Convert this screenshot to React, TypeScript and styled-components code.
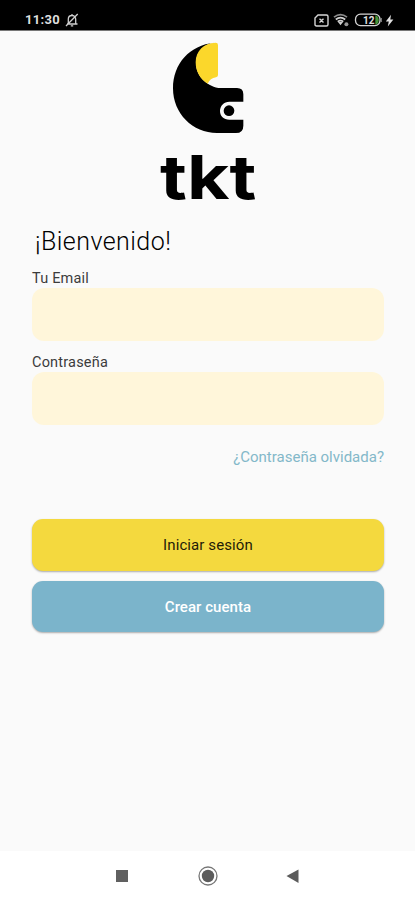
import React from "react";
import styled, { createGlobalStyle } from "styled-components";

const GlobalStyle = createGlobalStyle`
  * { box-sizing: border-box; }
  body { margin: 0; background: #fafafa; font-family: Roboto, "Liberation Sans", sans-serif; }
  svg { display: block; }
`;

const Screen = styled.div`
  display: flex;
  flex-direction: column;
  width: 415px;
  height: 900px;
  background: #fafafa;
  overflow: hidden;
`;

const StatusBar = styled.header`
  display: flex;
  align-items: flex-start;
  justify-content: space-between;
  height: 31px;
  padding: 11px 21px 0 25px;
  background: #000;
  border-bottom: 1px solid #777;
  color: #dedede;
`;

const StatusGroup = styled.div<{ $gap: number }>`
  display: flex;
  align-items: center;
  gap: ${(p) => p.$gap}px;
  height: 18px;
`;

const Clock = styled.span`
  font-size: 13px;
  font-weight: 700;
  line-height: 18px;
  letter-spacing: 0.3px;
`;

const Main = styled.main`
  display: flex;
  flex-direction: column;
  flex: 1;
  padding: 0 31px 0 32px;
`;

const Logo = styled.svg`
  flex: none;
  align-self: flex-start;
  margin: -1px 0 0 118px;
`;

const Title = styled.h1`
  margin: 4px 0 0 3px;
  font-size: 25px;
  font-weight: 300;
  line-height: 32px;
  letter-spacing: 0.45px;
  color: #000;
`;

const Label = styled.label`
  display: flex;
  flex-direction: column;
  margin-top: 12px;
  font-size: 14.5px;
  line-height: 18px;
  letter-spacing: 0.2px;
  color: #3c3c3c;
`;

const PasswordLabel = styled(Label)`
  margin-top: 13px;
`;

const Input = styled.input`
  width: 100%;
  height: 53px;
  padding: 0 14px;
  border: 0;
  border-radius: 12px;
  outline: 0;
  background: #fff6da;
  font: inherit;
`;

const ForgotLink = styled.a`
  align-self: flex-end;
  margin-top: 22px;
  font-size: 15px;
  line-height: 20px;
  color: #83b8c9;
  text-decoration: none;
`;

const Actions = styled.div`
  display: flex;
  flex-direction: column;
  gap: 10px;
  margin-top: 52px;
`;

const Button = styled.button<{ $primary?: boolean }>`
  height: ${(p) => (p.$primary ? 52 : 51)}px;
  padding: 0;
  border: 0;
  border-radius: 11px;
  background: ${(p) => (p.$primary ? "#f4d93e" : "#7bb4cb")};
  color: ${(p) => (p.$primary ? "#1f1c08" : "#fff")};
  box-shadow: 0 1px 2px rgba(0, 0, 0, 0.32);
  font: ${(p) => (p.$primary ? 400 : 500)} 15px/20px Roboto, sans-serif;
  letter-spacing: ${(p) => (p.$primary ? 0.1 : 0.05)}px;
`;

const NavBar = styled.nav`
  display: flex;
  align-items: flex-start;
  justify-content: space-between;
  height: 49px;
  padding: 14px 115px 0 115px;
  background: #fff;
`;

const BellOff = () => (
  <svg width="14" height="14" viewBox="0 0 14 14" fill="none" stroke="#cfcfcf" strokeWidth="1.3">
    <path d="M2 11h10.5M3.3 10.5V6.2C3.3 3.8 5 2.5 7 2.5s3.7 1.3 3.7 3.7v4.3M7 1v1.5M5.8 12.8h2.4M1 13 12.7 1" />
  </svg>
);

const SimIcon = () => (
  <svg width="15" height="13" viewBox="0 0 15 13" fill="none" stroke="#d6d6d6" strokeWidth="1.4">
    <path d="M4 1h8.5q1.5 0 1.5 1.5v8q0 1.5-1.5 1.5h-10Q1 12 1 10.5V4zM5.5 4.7l4 3.8M9.5 4.7 5.5 8.5" />
  </svg>
);

const WifiIcon = () => (
  <svg width="17" height="14" viewBox="0 0 17 14" fill="none" stroke="#d0d0d0" strokeWidth="1.7">
    <path d="M1 4.2Q7.5-.9 14 4.2" stroke="#8c8c8c" />
    <path d="M2.8 6.5Q7.5 2.7 12.2 6.5M4.7 8.7Q7.5 6.5 10.3 8.7" />
    <path d="M5 9 7.5 12.3 10 9z" fill="#d0d0d0" stroke="none" />
    <circle cx="13.4" cy="11.3" r="2" fill="#999" stroke="none" />
  </svg>
);

const BatteryIcon = () => (
  <svg width="28" height="14" viewBox="0 0 28 14">
    <path d="M21.3 2.5h1.2q2.3 1 2.3 4.5t-2.3 4.5h-1.2z" fill="#45963a" />
    <rect x="1.5" y="1.2" width="24.5" height="11.4" rx="5" fill="none" stroke="#d5d5d5" strokeWidth="1.3" />
    <path d="M27.2 5v4" stroke="#aaa" />
    <text x="9" y="10.6" fill="#e0e0e0" fontFamily="Roboto" fontSize="10" fontWeight="700">12</text>
  </svg>
);

const BoltIcon = () => (
  <svg width="8" height="13" viewBox="0 0 8 13" fill="#e0e0e0">
    <path d="M5 .8-.2 7.5h3l-1 5 5.6-7H4.3z" />
  </svg>
);

const BrandLogo = () => (
  <Logo width="120" height="192" viewBox="0 0 360 576" role="img" aria-label="tkt">
    <path
      d="M193 38C119 45 69 101 69 175c0 76 59 134 132 134h57q22 0 22-22v-18h-42c-17 0-28-11-28-26 0-16 12-28 28-28h42v-22q0-19-19-19h-56c-38-8-67-38-67-75 0-33 23-57 55-61z"
      fill="#000"
    />
    <path d="M197 38q7 0 7 7v90q0 6-6 7c-12 2-20 8-25 19-23-13-36-38-36-64 0-34 25-59 60-59z" fill="#fbd72b" />
    <circle cx="237" cy="242" r="16" fill="#000" />
    <text
      x="30"
      y="507"
      fontFamily="Inter, Open Sans, sans-serif"
      fontSize="183"
      fontWeight="750"
      textLength="289"
      lengthAdjust="spacingAndGlyphs"
    >
      tkt
    </text>
  </Logo>
);

export default function App() {
  return (
    <Screen>
      <GlobalStyle />
      <StatusBar>
        <StatusGroup $gap={5}>
          <Clock>11:30</Clock>
          <BellOff />
        </StatusGroup>
        <StatusGroup $gap={4}>
          <SimIcon />
          <WifiIcon />
          <BatteryIcon />
          <BoltIcon />
        </StatusGroup>
      </StatusBar>
      <Main>
        <BrandLogo />
        <Title>¡Bienvenido!</Title>
        <Label>
          Tu Email
          <Input type="email" />
        </Label>
        <PasswordLabel>
          Contraseña
          <Input type="password" />
        </PasswordLabel>
        <ForgotLink>¿Contraseña olvidada?</ForgotLink>
        <Actions>
          <Button $primary>Iniciar sesión</Button>
          <Button>Crear cuenta</Button>
        </Actions>
      </Main>
      <NavBar>
        <svg width="14" height="22" viewBox="0 0 14 22"><path d="M1 5h12v12H1z" fill="#606060" /></svg>
        <svg width="22" height="22" viewBox="0 0 22 22">
          <circle cx="11" cy="11" r="9" fill="none" stroke="#777" strokeWidth="1.3" />
          <circle cx="11" cy="11" r="6.2" fill="#5c5c5c" />
        </svg>
        <svg width="14" height="22" viewBox="0 0 14 22"><path d="M.5 11 12.5 4.5v13.5z" fill="#5c5c5c" /></svg>
      </NavBar>
    </Screen>
  );
}
